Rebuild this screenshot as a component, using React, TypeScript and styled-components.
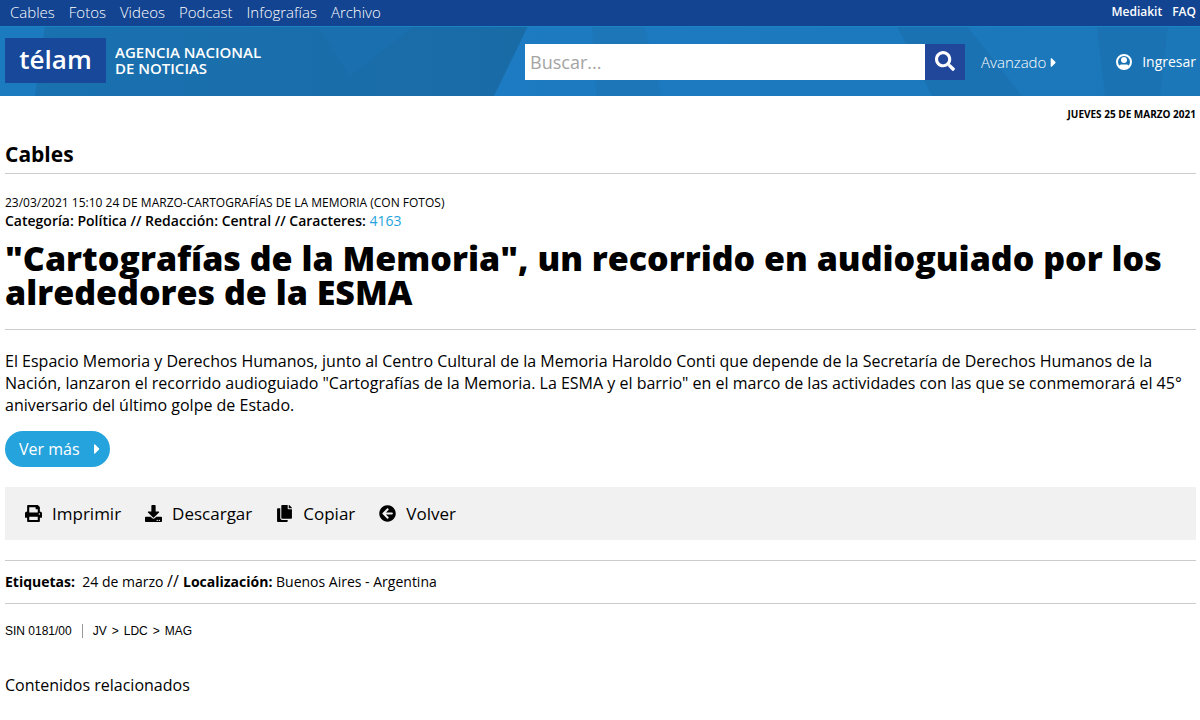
import React from "react";
import styled, { createGlobalStyle } from "styled-components";
import {
  FaArrowCircleLeft,
  FaCaretRight,
  FaCopy,
  FaDownload,
  FaPrint,
  FaSearch,
} from "react-icons/fa";

const GlobalStyle = createGlobalStyle`
  *, *::before, *::after { box-sizing: border-box; }
  body {
    margin: 0;
    background: #fff;
    color: #000;
    font-family: "Open Sans", "Noto Sans", sans-serif;
  }
  h1, h2, h3, p { margin: 0; }
  a { color: inherit; text-decoration: none; }
  svg { flex-shrink: 0; }
`;

const TopBar = styled.div`
  display: flex;
  justify-content: space-between;
  align-items: center;
  height: 26px;
  padding: 0 4px 2px 10px;
  background: #124491;
  color: #fff;
`;

const MainNav = styled.nav`
  display: flex;
  gap: 14px;
  font-size: 15px;
  font-weight: 300;
  line-height: 20px;
`;

const SideNav = styled.nav`
  display: flex;
  gap: 10px;
  font-size: 12px;
  font-weight: 600;
  line-height: 20px;
`;

const Header = styled.header`
  position: relative;
  display: flex;
  justify-content: space-between;
  align-items: center;
  height: 70px;
  padding: 0 4px 0 5px;
  background: #1c7abf;
  color: #fff;
`;

const Backdrop = styled.svg`
  position: absolute;
  inset: 0;
  width: 100%;
  height: 100%;
`;

const Brand = styled.a`
  position: relative;
  display: flex;
  align-items: center;
  gap: 9px;
  padding-bottom: 2px;
`;

const Logo = styled.span`
  width: 101px;
  height: 45px;
  background: #17489a;
  font-size: 26px;
  font-weight: 600;
  line-height: 43px;
  text-align: center;
`;

const Tagline = styled.span`
  font-size: 15px;
  font-weight: 600;
  line-height: 16px;
`;

const HeaderTools = styled.div`
  position: relative;
  display: flex;
  align-items: center;
  flex: 0 0 calc(56% + 4px);
  padding-top: 2px;
`;

const SearchForm = styled.form`
  display: flex;
  flex: 0 1 440px;
  height: 36px;
`;

const SearchInput = styled.input`
  flex: 1;
  min-width: 0;
  padding: 0 5px;
  border: 0;
  background: #fff;
  font: 18px "Open Sans", sans-serif;
  color: #333;
  &::placeholder { color: #a4a4a4; opacity: 1; }
`;

const SearchButton = styled.button`
  display: flex;
  align-items: center;
  justify-content: center;
  width: 40px;
  padding: 0 0 2px;
  border: 0;
  background: #21479b;
  color: #fff;
  font-size: 20px;
`;

const HeaderLink = styled.a<{ $strong?: boolean }>`
  display: flex;
  align-items: center;
  gap: ${(p) => (p.$strong ? 10 : 0)}px;
  margin-left: ${(p) => (p.$strong ? "auto" : "16px")};
  font-size: ${(p) => (p.$strong ? 14 : 15)}px;
  font-weight: ${(p) => (p.$strong ? 500 : 300)};
  line-height: 20px;
`;

const Page = styled.main`
  padding: 8px 4px 20px 5px;
`;

const DateLine = styled.p`
  font-size: 10px;
  font-weight: 700;
  line-height: 20px;
  text-align: right;
`;

const SectionTitle = styled.h2`
  margin-top: 14px;
  padding-bottom: 3px;
  border-bottom: 1px solid #ccc;
  font-size: 21px;
  line-height: 32px;
`;

const Meta = styled.div`
  margin-top: 20px;
`;

const Slug = styled.p`
  font-size: 12px;
  line-height: 18px;
`;

const Category = styled.p`
  font-size: 14px;
  font-weight: 600;
  line-height: 18px;
  a { color: #25a3dc; font-weight: 400; }
`;

const Headline = styled.h1`
  margin-top: 11px;
  padding-bottom: 20px;
  border-bottom: 1px solid #ccc;
  font-size: 34px;
  font-weight: 800;
  line-height: 34px;
`;

const Lead = styled.p`
  margin-top: 20px;
  font-size: 16px;
  line-height: 22px;
`;

const MoreButton = styled.button`
  display: flex;
  align-items: center;
  gap: 9px;
  height: 36px;
  margin-top: 15px;
  padding: 0 5px 0 14px;
  border: 0;
  border-radius: 18px;
  background: #25a3dc;
  color: #fff;
  font: 16px/22px "Open Sans", sans-serif;
`;

const ActionBar = styled.div`
  display: flex;
  align-items: center;
  gap: 24px;
  height: 53px;
  margin-top: 20px;
  padding: 0 20px;
  background: #f1f1f1;
`;

const Action = styled.button`
  display: flex;
  align-items: center;
  gap: 10px;
  padding: 0;
  border: 0;
  background: none;
  color: #000;
  font: 17px/24px "Open Sans", sans-serif;
`;

const Tags = styled.p`
  margin-top: 20px;
  padding: 11px 0;
  border: 1px solid #ccc;
  border-width: 1px 0;
  font-size: 14px;
  line-height: 20px;
`;

const Slashes = styled.span`
  font-size: 16px;
  line-height: 16px;
`;

const Credits = styled.div`
  display: flex;
  align-items: center;
  margin-top: 18px;
  font: 12px/18px "Liberation Sans", Arial, sans-serif;
`;

const Authors = styled.span`
  display: flex;
  gap: 5px;
  margin-left: 10px;
  padding-left: 10px;
  border-left: 1px solid #999;
  line-height: 14px;
`;

const Related = styled.h3`
  margin-top: 33px;
  font-size: 16px;
  font-weight: 400;
  line-height: 24px;
`;

const UserIcon = () => (
  <svg width="16" height="16" viewBox="0 0 16 16" aria-hidden="true">
    <circle cx="8" cy="8" r="7" fill="none" stroke="currentColor" strokeWidth="2" />
    <circle cx="8" cy="6" r="3" fill="currentColor" />
    <path d="M2.5 12.5C4 10 6 10.5 8 10.5S12 10 13.5 12.5L8 16Z" fill="currentColor" />
  </svg>
);

const sections = ["Cables", "Fotos", "Videos", "Podcast", "Infografías", "Archivo"];

const actions = [
  { label: "Imprimir", Icon: FaPrint },
  { label: "Descargar", Icon: FaDownload },
  { label: "Copiar", Icon: FaCopy },
  { label: "Volver", Icon: FaArrowCircleLeft },
];

export default function App() {
  return (
    <>
      <GlobalStyle />
      <TopBar>
        <MainNav aria-label="Secciones">
          {sections.map((name) => (
            <a key={name} href="#">{name}</a>
          ))}
        </MainNav>
        <SideNav aria-label="Ayuda">
          <a href="#">Mediakit</a>
          <a href="#">FAQ</a>
        </SideNav>
      </TopBar>
      <Header>
        <Backdrop viewBox="0 0 1200 70" preserveAspectRatio="none" aria-hidden="true">
          <defs>
            <linearGradient id="shade">
              <stop offset="0" stopColor="#1a71b0" />
              <stop offset="1" stopColor="#196ba6" />
            </linearGradient>
            <linearGradient id="right">
              <stop offset="0" stopColor="#1d7bc3" />
              <stop offset="1" stopColor="#1b77b8" />
            </linearGradient>
          </defs>
          <path d="M480 0H1200V70H480Z" fill="url(#right)" />
          <path d="M45 0H528L494 70H35Z" fill="url(#shade)" />
          <path d="M318 0H415L350 50Z" fill="#1a6fae" />
          <path d="M592 0H645L662 70H596Z" fill="#1c76b8" />
          <path d="M897 0H967L1022 70H932Z" fill="#1b72b2" />
          <path d="M1097 0H1168L1160 70H1105Z" fill="#1b72b2" />
          <path d="M0 0H1200V1H0Z" fill="#1d82c4" />
        </Backdrop>
        <Brand href="#">
          <Logo>télam</Logo>
          <Tagline>AGENCIA NACIONAL<br />DE NOTICIAS</Tagline>
        </Brand>
        <HeaderTools>
          <SearchForm role="search">
            <SearchInput type="text" placeholder="Buscar..." aria-label="Buscar" />
            <SearchButton type="submit" aria-label="Buscar"><FaSearch /></SearchButton>
          </SearchForm>
          <HeaderLink href="#">Avanzado<FaCaretRight /></HeaderLink>
          <HeaderLink href="#" $strong><UserIcon />Ingresar</HeaderLink>
        </HeaderTools>
      </Header>
      <Page>
        <DateLine>JUEVES 25 DE MARZO 2021</DateLine>
        <SectionTitle>Cables</SectionTitle>
        <Meta>
          <Slug>23/03/2021 15:10 24 DE MARZO-CARTOGRAFÍAS DE LA MEMORIA (CON FOTOS)</Slug>
          <Category>
            Categoría: Política // Redacción: Central // Caracteres: <a href="#">4163</a>
          </Category>
        </Meta>
        <Headline>
          "Cartografías de la Memoria", un recorrido en audioguiado por los alrededores de la ESMA
        </Headline>
        <Lead>
          El Espacio Memoria y Derechos Humanos, junto al Centro Cultural de la Memoria Haroldo Conti que
          depende de la Secretaría de Derechos Humanos de la Nación, lanzaron el recorrido audioguiado
          "Cartografías de la Memoria. La ESMA y el barrio" en el marco de las actividades con las que se
          conmemorará el 45° aniversario del último golpe de Estado.
        </Lead>
        <MoreButton type="button">Ver más<FaCaretRight /></MoreButton>
        <ActionBar>
          {actions.map(({ label, Icon }) => (
            <Action key={label} type="button"><Icon />{label}</Action>
          ))}
        </ActionBar>
        <Tags>
          <b>Etiquetas:</b>&nbsp; 24 de marzo <Slashes>// </Slashes><b>Localización:</b> Buenos Aires - Argentina
        </Tags>
        <Credits>
          <span>SIN 0181/00</span>
          <Authors>
            <span>JV</span>
            <span>&gt;</span>
            <span>LDC</span>
            <span>&gt;</span>
            <span>MAG</span>
          </Authors>
        </Credits>
        <Related>Contenidos relacionados</Related>
      </Page>
    </>
  );
}
